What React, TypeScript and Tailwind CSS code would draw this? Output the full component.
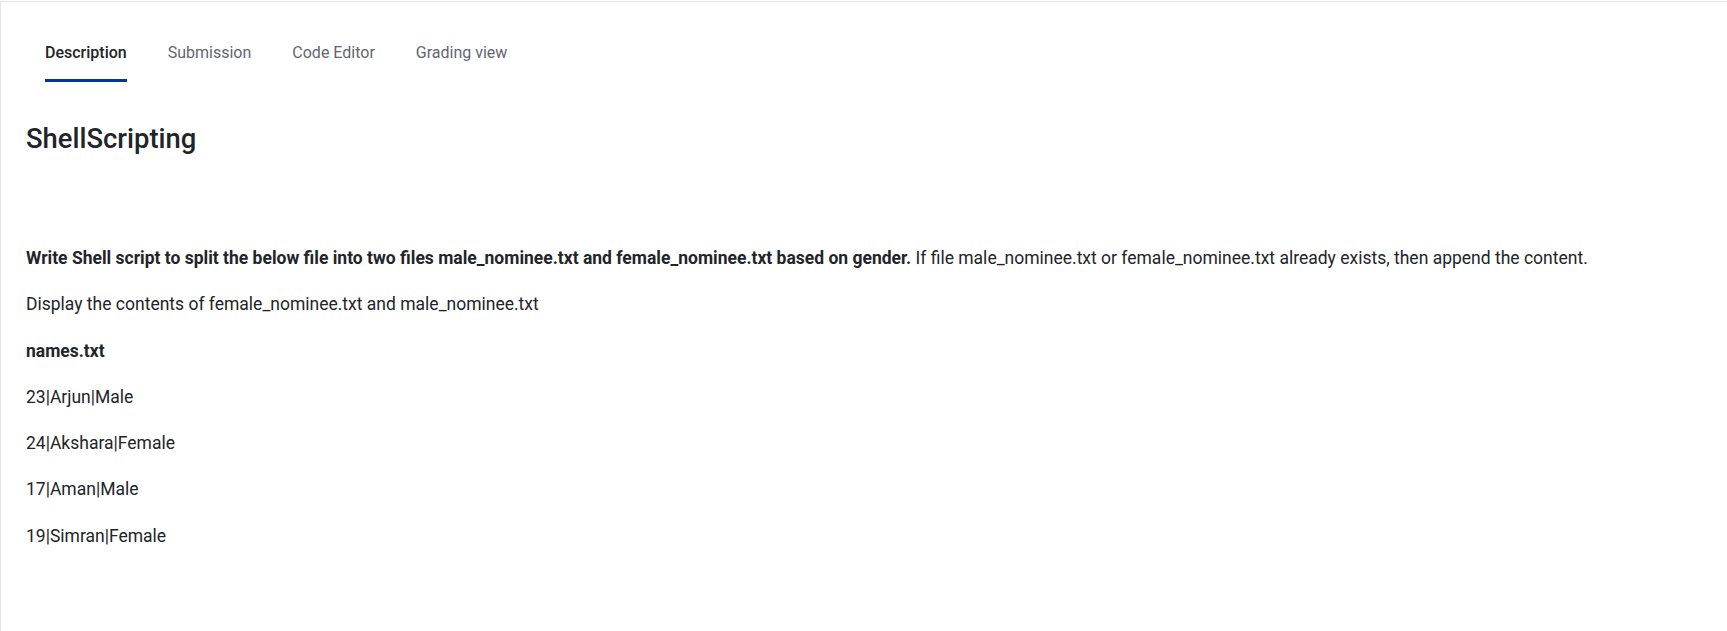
import React from "react";

const tabs = ["Description", "Submission", "Code Editor", "Grading view"];

const rows = ["23|Arjun|Male", "24|Akshara|Female", "17|Aman|Male", "19|Simran|Female"];

export default function App() {
  return (
    <div className="min-h-screen bg-white pt-px" style={{ fontFamily: "Roboto, 'Noto Sans', sans-serif" }}>
      <div className="min-h-[630px] border-l border-t border-[#e6e6e6]">
        {/* Tabs */}
        <nav className="flex gap-[41px] pl-[44px] pt-[39px]">
          {tabs.map((t, i) => (
            <button key={t} className="flex flex-col items-stretch">
              <span
                className={`text-[16px] leading-[24px] ${
                  i === 0 ? "font-medium text-[#212529]" : "text-[#5f6670]"
                }`}
              >
                {t}
              </span>
              <span className={`mt-[14px] h-[3px] ${i === 0 ? "bg-[#00369f]" : "bg-transparent"}`} />
            </button>
          ))}
        </nav>

        <div className="pl-[25px] text-[#212529]">
          <h1 className="mt-[39px] text-[27.4px] font-medium leading-[36px]">ShellScripting</h1>

          <div className="mt-[88px] flex flex-col gap-[20.3px] text-[17.5px] leading-[26px]">
            <p>
              <span className="font-bold">
                Write Shell script to split the below file into two files male_nominee.txt and female_nominee.txt based
                on gender.
              </span>{" "}
              If file male_nominee.txt or female_nominee.txt already exists, then append the content.
            </p>
            <p>Display the contents of female_nominee.txt and male_nominee.txt</p>
            <p className="font-bold">names.txt</p>
            {rows.map((r) => (
              <p key={r}>{r}</p>
            ))}
          </div>
        </div>
      </div>
    </div>
  );
}
